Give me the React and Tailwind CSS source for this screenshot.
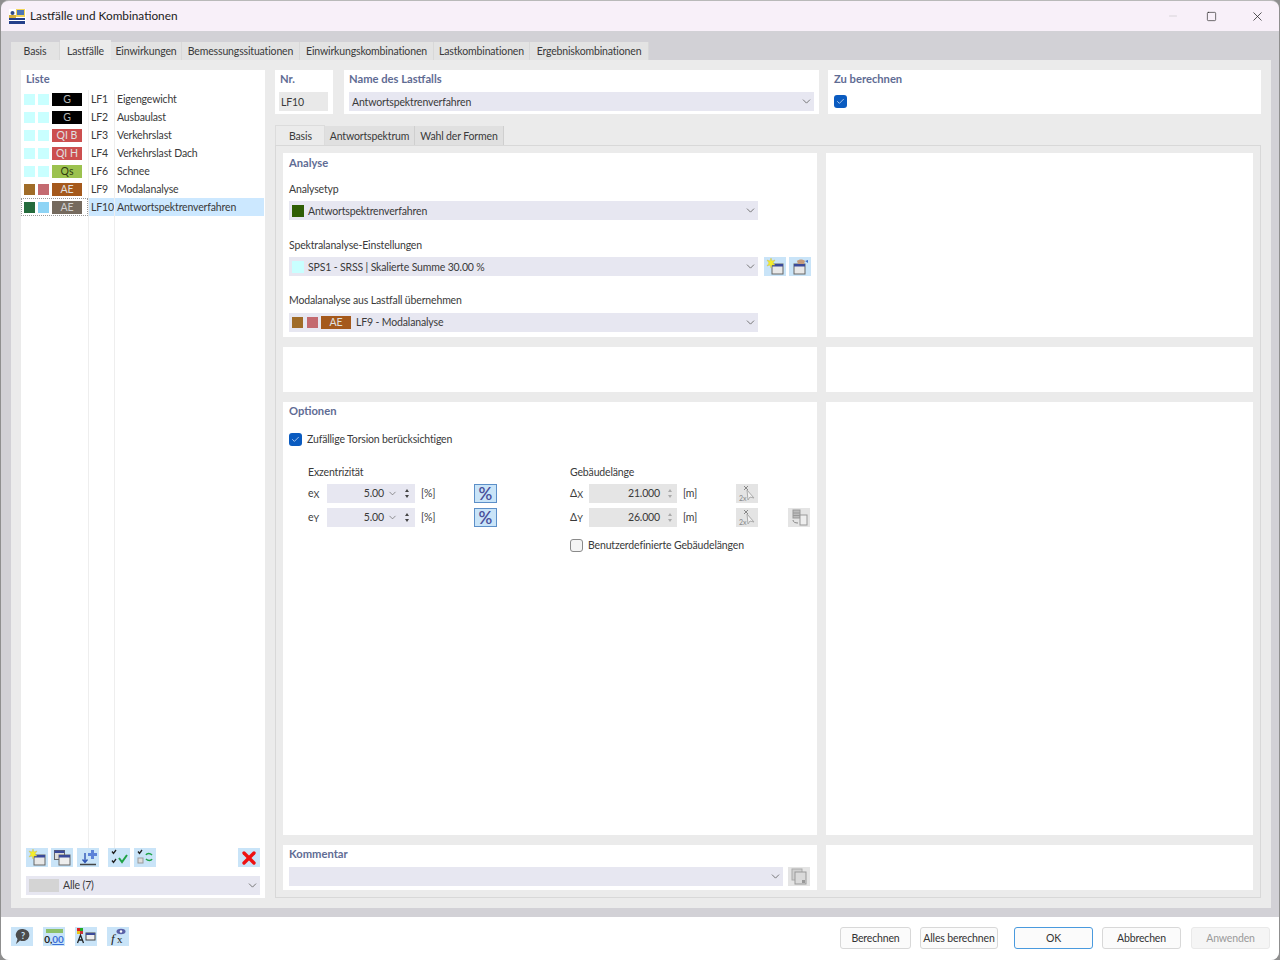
import React from "react";
import { ChevronDown, Check, Minus, Square, X } from "lucide-react";

const F = { fontFamily: 'Lato, "Open Sans", sans-serif' };
const H = ({ children }) => <div className="text-[11.2px] leading-[14px] font-bold text-[#5f6c94] whitespace-nowrap">{children}</div>;
const L = ({ children, className = "" }) => <div className={`text-[10.5px] tracking-[-0.15px] leading-[14px] text-[#3a3a3a] whitespace-nowrap ${className}`}>{children}</div>;
const Sw = ({ c, className = "" }) => <span className={`block w-[11px] h-[11px] shrink-0 ${className}`} style={{ background: c }} />;
const Badge = ({ c, t, fg = "#e0e0e0" }) => <span className="flex items-center justify-center w-[30px] h-[13px] text-[10.5px] leading-none shrink-0 whitespace-nowrap" style={{ background: c, color: fg }}>{t}</span>;
const Chev = ({ s = 13 }) => <ChevronDown size={s} strokeWidth={1.6} className="text-[#666] shrink-0" />;
const Tx = ({ children }) => <span className="pt-[2px]">{children}</span>;

const rows = [
  ["#c9ffff", "#c9ffff", "#000000", "G", "LF1", "Eigengewicht", "#b8b8b8"],
  ["#c9ffff", "#c9ffff", "#000000", "G", "LF2", "Ausbaulast", "#b8b8b8"],
  ["#c9ffff", "#c9ffff", "#cc4f4f", "QI B", "LF3", "Verkehrslast"],
  ["#c9ffff", "#c9ffff", "#cc4f4f", "QI H", "LF4", "Verkehrslast Dach"],
  ["#c9ffff", "#c9ffff", "#9cc24f", "Qs", "LF6", "Schnee", "#2f3b10"],
  ["#a06c28", "#c46a70", "#a5591c", "AE", "LF9", "Modalanalyse"],
  ["#246b3c", "#8ed4f5", "#756a5e", "AE", "LF10", "Antwortspektrenverfahren", "#d0d0d0", true],
];

function IconBtn({ children, off, className = "" }) {
  return <span className={`flex items-center justify-center w-[22px] h-[19px] shrink-0 ${off ? "bg-[#e4e4e4]" : "bg-[#c9e4f8]"} ${className}`}>{children}</span>;
}
const NewWin = () => (
  <svg width="18" height="17" viewBox="0 0 18 17"><rect x="6" y="6" width="11" height="10" fill="#e8e8e8" stroke="#666" /><rect x="6" y="6" width="11" height="2.500" fill="#3a4a9a" /><path d="M5 0l1 3 3-1-2 3 2 2-3 0-1 3-1-3-3 1 2-3-2-3 3 1z" fill="#f4ee2a" stroke="#c8b84a" strokeWidth=".4" /></svg>
);
const OpenWin = () => (
  <svg width="18" height="17" viewBox="0 0 18 17"><rect x="3" y="6" width="11" height="10" fill="#e8e8e8" stroke="#666" /><rect x="3" y="6" width="11" height="2.500" fill="#3a4a9a" /><path d="M6 3c2-2 6-2 8 0l-1 3H7z" fill="#c49a7a" /><path d="M14 3l3-1 0 3z" fill="#3f6fc8" /></svg>
);
const CopyWin = () => (
  <svg width="18" height="17" viewBox="0 0 18 17"><rect x="1.500" y="1.500" width="10" height="9" fill="#ddd" stroke="#666" /><rect x="1.500" y="1.500" width="10" height="2.500" fill="#3a4a9a" /><rect x="6" y="6" width="11" height="10" fill="#eee" stroke="#666" /><rect x="6" y="6" width="11" height="2.500" fill="#3a4a9a" /></svg>
);
const Import = () => (
  <svg width="18" height="17" viewBox="0 0 18 17"><path d="M1 15.500h16" stroke="#444" strokeWidth="1.600" /><path d="M6 4v9M3.500 10.500L6 13.500l2.500-3" stroke="#2f55b5" strokeWidth="1.400" fill="none" /><path d="M9 4h3V1h3v3h3v3h-3v3h-3V7H9z" fill="#5b82d8" /></svg>
);
const CheckAll = () => (
  <svg width="18" height="17" viewBox="0 0 18 17" fill="none"><path d="M2 2.500l1.500 2L6 1M2 11.500l1.500 2L6 10" stroke="#222" strokeWidth="1.300" /><path d="M9 9l3 4 5-7" stroke="#1fa347" strokeWidth="2" /></svg>
);
const CheckSwap = () => (
  <svg width="18" height="17" viewBox="0 0 18 17" fill="none"><path d="M2 2.500l1.500 2L6 1" stroke="#222" strokeWidth="1.300" /><rect x="2" y="9" width="5" height="5" stroke="#999" fill="#ddd" /><path d="M10 6c1-2 4-2 6 0M16 10c-1 2-4 2-6 0" stroke="#1fa347" strokeWidth="1.600" /></svg>
);
const HelpI = () => (
  <svg width="18" height="17" viewBox="0 0 18 17"><path d="M10 1a6.500 6 0 1 1-3 11.400L3 16l1.500-5A6.500 6 0 0 1 10 1z" fill="#4c4c4c" /><text x="10" y="11" textAnchor="middle" fontSize="9" fontWeight="700" fill="#c9e4f8">?</text></svg>
);
const NumI = () => (
  <div className="flex flex-col items-center leading-none">
    <span className="block w-[17px] h-[4px] bg-[#8cc06a]" />
    <span className="text-[10px] font-bold leading-[12px] text-[#222]">0,<span className="text-[#3d6fd8] underline">00</span></span>
  </div>
);
const ColorI = () => (
  <svg width="20" height="17" viewBox="0 0 20 17"><rect x="1" y="0" width="3" height="3" fill="#d22" /><rect x="4" y="0" width="3" height="3" fill="#2a2" /><rect x="1" y="3" width="3" height="3" fill="#e7c21a" /><rect x="4" y="3" width="3" height="3" fill="#c33" /><path d="M1.500 15L4.500 7l3 8M2.500 12h4" stroke="#222" strokeWidth="1.300" fill="none" /><rect x="10" y="5" width="9" height="7" fill="#eee" stroke="#444" /><rect x="10" y="5" width="9" height="2" fill="#3a4a9a" /></svg>
);
const FxI = () => (
  <svg width="18" height="17" viewBox="0 0 18 17"><ellipse cx="12" cy="3.500" rx="4.500" ry="2.800" fill="#5a62a8" /><circle cx="12" cy="3.500" r="1.200" fill="#fff" /><text x="2" y="15" fontSize="13" fontStyle="italic" fontFamily="Liberation Serif" fill="#222">f</text><text x="8" y="15" fontSize="11" fontFamily="Liberation Serif" fill="#222">x</text></svg>
);
const Bldg = () => (
  <svg width="18" height="17" viewBox="0 0 18 17" fill="none"><path d="M6 1l4 4M10 1L6 5" stroke="#888" /><path d="M9 5l7 8-4-1-2 3z" fill="#f4f4f4" stroke="#aaa" /><text x="1" y="16" fontSize="7" fill="#888">2x</text></svg>
);
const CopyDoc = () => (
  <svg width="18" height="17" viewBox="0 0 18 17" fill="none"><rect x="3" y="1" width="7" height="8" fill="#bbb" stroke="#999" /><path d="M3 4h7M3 6.500h7" stroke="#999" /><rect x="10" y="6" width="7" height="10" fill="#eee" stroke="#999" /><path d="M3 11c0 2 2 3 5 3" stroke="#888" /></svg>
);
const CopyOff = () => (
  <svg width="18" height="17" viewBox="0 0 18 17"><rect x="2" y="1" width="10" height="11" fill="#d0d0d0" stroke="#aaa" /><rect x="5" y="4" width="11" height="12" fill="#dadada" stroke="#999" /><rect x="12" y="12" width="3" height="3" fill="#999" /></svg>
);

function Drop({ className = "", children }) {
  return (
    <div className={`flex items-center h-[19px] bg-[#e7e7f1] pl-[3px] pr-[1px] ${className}`}>
      <div className="flex-1 flex items-center min-w-0 text-[10.5px] tracking-[-0.15px] text-[#3a3a3a] whitespace-nowrap">{children}</div>
      <span className="w-[14px] flex justify-center"><Chev /></span>
    </div>
  );
}
const Cb = ({ on }) => on ? (
  <span className="flex items-center justify-center w-[13px] h-[13px] rounded-[3px] bg-[#0a5bc0] shrink-0"><Check size={9} strokeWidth={2} className="text-[#d4e4f8]" /></span>
) : (
  <span className="block w-[13px] h-[13px] rounded-[3px] bg-[#f4f4f4] border border-[#8a8a8a] shrink-0" />
);
const Panel = ({ className = "", children }) => <div className={`bg-white ${className}`}>{children}</div>;

function Spin({ value, arrow, off }) {
  return (
    <div className={`flex items-center justify-end w-[88px] h-[19px] ${off ? "bg-[#e5e5e5]" : "bg-[#e7e7f1]"} text-[10.5px] tracking-[-0.15px] text-[#3a3a3a]`}>
      <span>{value}</span>
      {arrow && <span className="ml-[3px]"><ChevronDown size={11} strokeWidth={1.5} className="text-[#666]" /></span>}
      <span className={`flex flex-col items-center w-[12px] ${arrow ? "ml-[3px] mr-[2px]" : "ml-[4px] mr-[1px]"}`}>
        <span className={`block w-0 h-0 border-x-[2px] border-x-transparent border-b-[3px] ${off ? "border-b-[#aaa]" : "border-b-[#444]"} mb-[3px]`} />
        <span className={`block w-0 h-0 border-x-[2px] border-x-transparent border-t-[3px] ${off ? "border-t-[#aaa]" : "border-t-[#444]"}`} />
      </span>
    </div>
  );
}
const Pct = () => <span className="flex items-center justify-center w-[23px] h-[19px] bg-[#c9e4f8] border border-[#5c8fc8] text-[17px] leading-none font-semibold text-[#4a4f9a] ml-auto">%</span>;
const Sub = ({ children }) => <span className="text-[9px] relative top-[1px]">{children}</span>;

const Btn = ({ children, className = "", w }) => (
  <span className={`flex items-center justify-center h-[22px] pt-[2px] rounded-[3px] border text-[10.5px] tracking-[-0.15px] whitespace-nowrap ${className}`} style={{ width: w }}>{children}</span>
);

const tabs = [["Basis", 49], ["Lastfälle", 51, true], ["Einwirkungen", 71], ["Bemessungssituationen", 118], ["Einwirkungskombinationen", 134], ["Lastkombinationen", 96], ["Ergebniskombinationen", 119]];

export default function App() {
  return (
    <div className="w-[1280px] h-[960px] bg-[#8f8f8f] overflow-hidden" style={F}>
      <div className="h-full flex flex-col rounded-[8px] overflow-hidden bg-[#d2d1d6] ml-[1px] mr-[1px] mb-[1px] border-t border-[#b9b9b9]">
        <div className="h-[30px] shrink-0 bg-[#f8f0f9] flex items-center pl-[8px]">
          <svg width="17" height="15" viewBox="0 0 17 15" className="shrink-0">
            <rect x="0" y="0" width="17" height="15" fill="#fff" />
            <rect x="7" y="0" width="9" height="8" fill="#f1d45a" />
            <rect x="8" y="1" width="7" height="5" fill="#4b74b5" />
            <circle cx="3.500" cy="4" r="2" fill="#2c4a8a" />
            <rect x="0" y="6" width="7" height="3" fill="#d8b23c" />
            <rect x="0" y="9" width="16" height="2" fill="#24408a" />
            <rect x="0" y="12" width="16" height="3" fill="#24408a" />
          </svg>
          <span className="ml-[4px] text-[11.8px] text-[#222] whitespace-nowrap">Lastfälle und Kombinationen</span>
          <div className="ml-auto flex items-center">
            <Minus size={12} strokeWidth={1} className="text-[#bbb] mr-[27px]" />
            <Square size={11} strokeWidth={1.400} className="text-[#222] mr-[33px]" />
            <X size={15} strokeWidth={1.200} className="text-[#222] mr-[14px]" />
          </div>
        </div>

        <div className="flex items-end h-[29px] shrink-0 pl-[10px]">
          {tabs.map(([t, w, a]) => (
            <div key={t} className={`flex items-center justify-center text-[10.5px] tracking-[-0.15px] text-[#3a3a3a] whitespace-nowrap ${a ? "h-[20px] pt-[3px] bg-[#ebebeb]" : "h-[18px] pt-[2px] bg-[#e3e3e3] border-r border-[#d8d8d8]"}`} style={{ width: w }}>{t}</div>
          ))}
        </div>

        <div className="h-[848px] shrink-0 ml-[10px] mr-[8px] bg-[#ebebeb] p-[10px] flex gap-[10px]">
          <Panel className="w-[244px] shrink-0 flex flex-col">
            <div className="pl-[5px] h-[20px] pb-[2px] flex items-center"><H>Liste</H></div>
            <div className="flex-1 flex flex-col">
              {rows.map((r) => (
                <div key={r[4]} className="flex h-[18px] shrink-0 items-stretch">
                  <div className={`w-[67px] shrink-0 flex items-center gap-[3px] ${r[7] ? "border border-dotted border-[#999] pl-[2px]" : "pl-[3px]"}`}>
                    <Sw c={r[0]} /><Sw c={r[1]} /><Badge c={r[2]} t={r[3]} fg={r[6]} />
                  </div>
                  <div className={`w-[26px] shrink-0 border-l border-[#eeeeee] pl-[2px] pt-[2px] flex items-center text-[10.5px] tracking-[-0.15px] text-[#3a3a3a] whitespace-nowrap ${r[7] ? "bg-[#cce8ff]" : ""}`}>{r[4]}</div>
                  <div className={`flex-1 border-l border-[#eeeeee] pl-[2px] pt-[2px] flex items-center text-[10.5px] tracking-[-0.15px] text-[#3a3a3a] whitespace-nowrap ${r[7] ? "bg-[#cce8ff] mr-[1px]" : ""}`}>{r[5]}</div>
                </div>
              ))}
              <div className="flex flex-1">
                <div className="w-[67px] shrink-0" />
                <div className="w-[26px] shrink-0 border-l border-[#eeeeee]" />
                <div className="flex-1 border-l border-[#eeeeee]" />
              </div>
            </div>
            <div className="flex items-center pl-[5px] pr-[5px] h-[19px] -mt-[1px]">
              <IconBtn><NewWin /></IconBtn>
              <IconBtn className="ml-[3px]"><CopyWin /></IconBtn>
              <IconBtn className="ml-[4px]"><Import /></IconBtn>
              <IconBtn className="ml-[9px]"><CheckAll /></IconBtn>
              <IconBtn className="ml-[4px]"><CheckSwap /></IconBtn>
              <IconBtn className="ml-auto"><X size={20} strokeWidth={4} className="text-[#ee1111]" /></IconBtn>
            </div>
            <div className="px-[5px] mt-[9px] mb-[3px]">
              <Drop>
                <span className="block w-[30px] h-[13px] bg-[#d4d4d4] mr-[4px]" />
                <span>Alle (7)</span>
              </Drop>
            </div>
          </Panel>

          <div className="flex-1 flex flex-col min-w-0">
            <div className="flex h-[44px] shrink-0">
              <Panel className="w-[58px] px-[5px] pt-[2px] shrink-0">
                <H>Nr.</H>
                <div className="mt-[6px] h-[19px] w-[49px] -ml-[1px] bg-[#e9e9e9] flex items-center pl-[2px] pt-[2px] text-[10.5px] tracking-[-0.15px] text-[#3a3a3a]">LF10</div>
              </Panel>
              <Panel className="w-[475px] ml-[11px] px-[5px] pt-[2px] shrink-0">
                <H>Name des Lastfalls</H>
                <Drop className="mt-[6px] w-[465px] pl-[2px]"><Tx>Antwortspektrenverfahren</Tx></Drop>
              </Panel>
              <Panel className="flex-1 ml-[9px] px-[6px] pt-[2px]">
                <H>Zu berechnen</H>
                <div className="mt-[9px]"><Cb on /></div>
              </Panel>
            </div>

            <div className="flex items-end h-[20px] mt-[11px] shrink-0">
              <div className="w-[50px] h-[20px] pl-[13px] pt-[2px] flex items-center text-[10.5px] tracking-[-0.15px] text-[#3a3a3a] bg-[#ebebeb] border-t border-x border-[#dcdcdc] whitespace-nowrap">Basis</div>
              <div className="w-[90px] h-[19px] pt-[2px] flex items-center justify-center text-[10.5px] tracking-[-0.15px] text-[#3a3a3a] bg-[#e0e0e0] border-r border-[#cfcfcf] whitespace-nowrap">Antwortspektrum</div>
              <div className="w-[89px] h-[19px] pt-[2px] flex items-center justify-center text-[10.5px] tracking-[-0.15px] text-[#3a3a3a] bg-[#e0e0e0] border-r border-[#cfcfcf] whitespace-nowrap">Wahl der Formen</div>
            </div>

            <div className="flex-1 border border-[#d8d8d8] p-[7px] flex flex-col min-h-0">
              <div className="flex gap-[9px] h-[184px] shrink-0">
                <Panel className="w-[534px] shrink-0 pl-[6px] pt-[3px]">
                  <H>Analyse</H>
                  <L className="mt-[12px]">Analysetyp</L>
                  <Drop className="mt-[5px] w-[469px]">
                    <span className="block w-[12px] h-[12px] bg-[#2f5e05] mr-[4px]" />
                    <Tx>Antwortspektrenverfahren</Tx>
                  </Drop>
                  <L className="mt-[18px]">Spektralanalyse-Einstellungen</L>
                  <div className="flex mt-[5px] items-center">
                    <Drop className="w-[469px]">
                      <span className="block w-[12px] h-[12px] bg-[#c9ffff] mr-[4px]" />
                      <Tx>SPS1 - SRSS | Skalierte Summe 30.00 %</Tx>
                    </Drop>
                    <IconBtn className="ml-[6px]"><NewWin /></IconBtn>
                    <IconBtn className="ml-[3px]"><OpenWin /></IconBtn>
                  </div>
                  <L className="mt-[17px]">Modalanalyse aus Lastfall übernehmen</L>
                  <Drop className="mt-[6px] w-[469px]">
                    <Sw c="#a06c28" className="mr-[4px]" />
                    <Sw c="#c46a70" className="mr-[3px]" />
                    <span className="mr-[5px]"><Badge c="#a5591c" t="AE" /></span>
                    <span>LF9 - Modalanalyse</span>
                  </Drop>
                </Panel>
                <Panel className="flex-1" />
              </div>
              <div className="flex gap-[9px] h-[45px] mt-[10px] shrink-0">
                <Panel className="w-[534px] shrink-0" />
                <Panel className="flex-1" />
              </div>
              <div className="flex gap-[9px] h-[433px] mt-[10px] shrink-0">
                <Panel className="w-[534px] shrink-0 pl-[6px] pt-[2px]">
                  <H>Optionen</H>
                  <div className="flex items-center gap-[5px] mt-[14px]">
                    <Cb on /><L>Zufällige Torsion berücksichtigen</L>
                  </div>
                  <div className="flex mt-[19px] pl-[19px]">
                    <div className="w-[189px] shrink-0">
                      <L>Exzentrizität</L>
                      {["X", "Y"].map((a) => (
                        <div key={a} className="flex items-center h-[19px] mt-[5px]">
                          <span className="w-[19px] text-[10.5px] text-[#3a3a3a]">e<Sub>{a}</Sub></span>
                          <Spin value="5.00" arrow />
                          <span className="ml-[6px] text-[10.5px] tracking-[-0.15px] text-[#3a3a3a]">[%]</span>
                          <Pct />
                        </div>
                      ))}
                    </div>
                    <div className="ml-[73px] flex-1 min-w-0 pr-[6px]">
                      <L>Gebäudelänge</L>
                      {[["X", "21.000"], ["Y", "26.000"]].map(([a, v], i) => (
                        <div key={a} className="flex items-center h-[19px] mt-[5px]">
                          <span className="w-[19px] text-[10.5px] text-[#3a3a3a]">Δ<Sub>{a}</Sub></span>
                          <Spin value={v} off />
                          <span className="ml-[6px] text-[10.5px] tracking-[-0.15px] text-[#3a3a3a] w-[20px]">[m]</span>
                          <IconBtn off className="ml-[33px]"><Bldg /></IconBtn>
                          {i === 1 && <IconBtn off className="ml-[30px]"><CopyDoc /></IconBtn>}
                        </div>
                      ))}
                      <div className="flex items-center gap-[5px] mt-[11px]">
                        <Cb /><L>Benutzerdefinierte Gebäudelängen</L>
                      </div>
                    </div>
                  </div>
                </Panel>
                <Panel className="flex-1" />
              </div>
              <div className="flex gap-[9px] h-[45px] mt-[10px] shrink-0">
                <Panel className="w-[534px] shrink-0 pl-[6px] pt-[2px]">
                  <H>Kommentar</H>
                  <div className="flex items-center mt-[6px]">
                    <Drop className="w-[494px]"><span /></Drop>
                    <IconBtn off className="ml-[5px]"><CopyOff /></IconBtn>
                  </div>
                </Panel>
                <Panel className="flex-1" />
              </div>
            </div>
          </div>
        </div>

        <div className="mt-[9px] flex-1 bg-white flex items-start pt-[10px] pl-[10px]">
          <IconBtn><HelpI /></IconBtn>
          <IconBtn className="ml-[10px]"><NumI /></IconBtn>
          <IconBtn className="ml-[10px]"><ColorI /></IconBtn>
          <IconBtn className="ml-[10px]"><FxI /></IconBtn>
          <div className="ml-auto flex items-center mr-[9px]">
            <Btn w={71} className="border-[#d8d8d8] bg-[#fbfbfb] text-[#333]">Berechnen</Btn>
            <Btn w={78} className="ml-[9px] border-[#d8d8d8] bg-[#fbfbfb] text-[#333]">Alles berechnen</Btn>
            <Btn w={79} className="ml-[16px] border-[#4a9ade] bg-[#fbfbfb] text-[#333]">OK</Btn>
            <Btn w={79} className="ml-[9px] border-[#d8d8d8] bg-[#fbfbfb] text-[#333]">Abbrechen</Btn>
            <Btn w={79} className="ml-[10px] border-[#e9e9e9] bg-[#f5f5f5] text-[#9a9a9a]">Anwenden</Btn>
          </div>
        </div>
      </div>
    </div>
  );
}
